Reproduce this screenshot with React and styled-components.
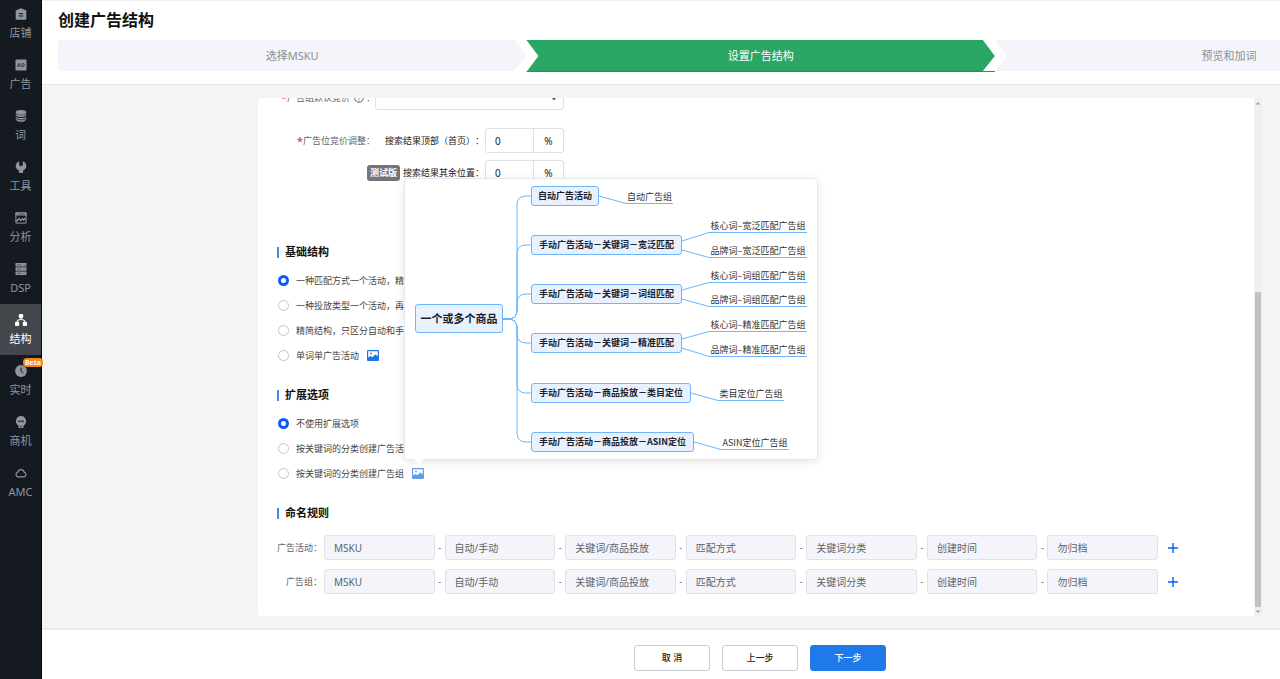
import React from "react";
import styled, { createGlobalStyle, css } from "styled-components";

const GlobalStyle = createGlobalStyle`
  * {
    box-sizing: border-box;
  }
  body {
    margin: 0;
    font-family: "Noto Sans", "Noto Sans CJK SC", sans-serif;
    font-size: 9px;
    text-spacing-trim: space-all;
    color: #222;
  }
  button, input, select {
    font-family: inherit;
    margin: 0;
  }
`;

const Page = styled.div`
  display: flex;
  height: 100vh;
  overflow: hidden;
  background: #f4f4f4;
`;

/* ---------- sidebar ---------- */

const Sidebar = styled.nav`
  flex: none;
  width: 42px;
  background: #151a21;
  border-right: 1px solid #05080c;
`;

const NavList = styled.ul`
  list-style: none;
  margin: -2px 0 0;
  padding: 0;
`;

const NavItem = styled.li`
  position: relative;
`;

const NavLink = styled.a`
  display: flex;
  flex-direction: column;
  align-items: center;
  gap: 5px;
  height: 51px;
  padding-top: 10px;
  font-size: 11px;
  line-height: 16px;
  text-decoration: none;
  color: ${p => (p.$active ? "#fff" : "#8f969e")};
  background: ${p => (p.$active ? "#43464b" : "transparent")};
`;

const Beta = styled.span`
  position: absolute;
  top: 3px;
  right: -2px;
  padding: 0 2px;
  border-radius: 4px;
  background: #ff8412;
  color: #fff;
  font-size: 7px;
  font-weight: 700;
  line-height: 9px;
`;

/* ---------- header ---------- */

const Main = styled.div`
  flex: 1;
  min-width: 0;
  display: flex;
  flex-direction: column;
`;

const Header = styled.header`
  flex: none;
  height: 85px;
  padding: 7px 0 0 16px;
  background: #fff;
  border-top: 1px solid #f0f0f0;
  border-bottom: 1px solid #e6e6e6;
  overflow: hidden;
`;

const Title = styled.h1`
  margin: 0 0 8px;
  font-size: 16px;
  line-height: 24px;
  color: #111;
`;

const Steps = styled.ol`
  display: flex;
  align-items: flex-start;
  width: 115%;
  margin: 0;
  padding: 0;
  list-style: none;
`;

const Step = styled.li`
  flex: 1;
  height: 31px;
  font-size: 11px;
  line-height: 31px;
  text-align: center;
  color: #8b8f96;
  background: #f4f5fa;
  clip-path: polygon(
    0 0,
    calc(100% - 12px) 0,
    100% 50%,
    calc(100% - 12px) 100%,
    0 100%,
    12px 50%
  );
  &:first-child {
    border-radius: 3px 0 0 3px;
    clip-path: polygon(
      0 0,
      calc(100% - 12px) 0,
      100% 50%,
      calc(100% - 12px) 100%,
      0 100%
    );
  }
  ${p =>
    p.$active &&
    css`
      height: 32px;
      color: #fff;
      background: #2aa765;
      border-bottom: 1px solid #149a54;
      clip-path: polygon(
        0 0,
        calc(100% - 12px) 0,
        100% 50%,
        calc(100% - 12px) calc(100% - 1px),
        100% calc(100% - 1px),
        100% 100%,
        0 100%,
        12px 50%
      );
    `}
`;

/* ---------- form panel ---------- */

const Body = styled.main`
  flex: 1;
  min-height: 0;
  display: flex;
  padding: 13px 18px 12px 216px;
`;

const Panel = styled.form`
  flex: 1;
  min-width: 0;
  display: flex;
  flex-direction: column;
  justify-content: flex-end;
  overflow: hidden;
  padding: 0 19px 22px;
  background: #fff;
  border-radius: 3px 0 0 3px;
`;

const Scrollbar = styled.div`
  flex: none;
  display: flex;
  flex-direction: column;
  justify-content: space-between;
  align-items: center;
  width: 8px;
  background: #f0f0f0;
`;

const Track = styled.div`
  flex: 1;
  display: flex;
  align-items: flex-end;
`;

const Thumb = styled.div`
  width: 6px;
  height: 63%;
  background: #c1c1c1;
`;

const ScrollArrow = styled.svg`
  width: 8px;
  height: 9px;
  fill: #a5a5a5;
`;

const BidRows = styled.div`
  flex: none;
  width: 287px;
  margin-bottom: 59px;
`;

const BidRow = styled.div`
  display: flex;
  align-items: center;
  height: 25px;
  margin-top: ${p => (p.$tight ? 7 : 18)}px;
`;

const BidLabel = styled.label`
  flex: none;
  display: flex;
  align-items: center;
  justify-content: flex-end;
  width: 98px;
  color: #606266;
  white-space: nowrap;
  svg {
    margin: 0 2px 0 4px;
  }
`;

const Required = styled.span`
  color: #f04848;
  font-size: 11px;
  font-weight: 700;
`;

const BidField = styled.div`
  flex: 1;
  display: flex;
  align-items: center;
  justify-content: flex-end;
`;

const SubLabel = styled.label`
  margin-right: 1px;
  color: #222;
  white-space: nowrap;
`;

const TestTag = styled.span`
  margin-right: 3px;
  padding: 0 3px;
  border-radius: 3px;
  background: #757575;
  color: #fff;
  font-weight: 700;
  line-height: 16px;
  white-space: nowrap;
`;

const Box = styled.div`
  display: flex;
  align-items: center;
  width: ${p => (p.$wide ? "189px" : "79px")};
  height: 25px;
  border: 1px solid #dcdfe6;
  border-radius: 3px;
  background: #fff;
`;

const PercentInput = styled.input`
  width: 48px;
  height: 23px;
  padding: 0 9px;
  border: 0;
  border-right: 1px solid #dcdfe6;
  background: transparent;
  font-size: 10px;
  color: #222;
`;

const Unit = styled.span`
  flex: 1;
  text-align: center;
  font-size: 10px;
`;

const Select = styled.select`
  flex: 1;
  height: 23px;
  border: 0;
  appearance: none;
  background: transparent;
`;

const SelectArrow = styled.svg`
  width: 6px;
  height: 6px;
  margin-right: 6px;
`;

/* ---------- sections ---------- */

const Section = styled.fieldset`
  flex: none;
  min-width: 0;
  margin: 0 0 ${p => (p.$last ? 0 : 19)}px;
  padding: 0;
  border: 0;
`;

const SectionTitle = styled.legend`
  display: flex;
  align-items: center;
  gap: 6px;
  padding: 0;
  margin-bottom: ${p => (p.$loose ? 14 : 8)}px;
  font-size: 11px;
  line-height: 16px;
  font-weight: 700;
  color: #111;
  &::before {
    content: "";
    width: 2px;
    height: 11px;
    background: #3f8cf0;
  }
`;

const OptionRow = styled.div`
  display: flex;
  align-items: center;
  height: 25px;
  padding-left: 1px;
`;

const Option = styled.label`
  display: flex;
  align-items: center;
  gap: 7px;
  color: #444;
  white-space: nowrap;
`;

const Radio = styled.input`
  appearance: none;
  width: 11px;
  height: 11px;
  border: 1px solid #c3c6cd;
  border-radius: 50%;
  background: #fff;
  &:checked {
    border: 3px solid #0a5cf5;
  }
`;

const Preview = styled.span`
  position: relative;
  margin-left: 8px;
  height: 11px;
`;

const PreviewButton = styled.button`
  display: block;
  width: 12px;
  height: 11px;
  padding: 0;
  border: 0;
  background: none;
  opacity: ${p => (p.$open ? 0.7 : 1)};
  svg {
    display: block;
  }
`;

/* ---------- structure popover ---------- */

const Popover = styled.div`
  position: absolute;
  z-index: 10;
  left: -8px;
  bottom: calc(100% + 8px);
  width: 414px;
  height: 282px;
  border: 1px solid #e6e8ee;
  border-radius: 3px;
  background: #fff;
  box-shadow: 0 2px 8px rgba(0, 0, 0, 0.1);
  font-family: "Noto Sans CJK SC", sans-serif;
  &::after {
    content: "";
    position: absolute;
    left: 9px;
    bottom: -5px;
    border: 5px solid transparent;
    border-top-color: #fff;
    border-bottom: 0;
  }
`;

const Links = styled.svg`
  position: absolute;
  left: 0;
  top: 0;
  width: 412px;
  height: 280px;
  fill: none;
  stroke: #6db6fb;
`;

const MapNode = styled.div`
  position: absolute;
  left: ${p => p.$x}px;
  top: ${p => p.$y}px;
  width: ${p => p.$w}px;
  height: ${p => (p.$root ? 29 : 20)}px;
  border: 1px solid #6db6fb;
  border-radius: 3px;
  background: #e9f1ff;
  color: #1a1f2b;
  font-size: ${p => (p.$root ? 11 : 9)}px;
  font-weight: 700;
  line-height: ${p => (p.$root ? 27 : 18)}px;
  text-align: center;
  white-space: nowrap;
`;

const Leaf = styled.div`
  position: absolute;
  left: ${p => p.$x}px;
  top: ${p => p.$y - 14}px;
  width: ${p => p.$w}px;
  height: 15px;
  border-bottom: 1px solid #6db6fb;
  line-height: 16px;
  text-align: center;
  white-space: nowrap;
  color: #333;
`;

/* ---------- naming ---------- */

const NameRow = styled.div`
  display: flex;
  align-items: center;
  height: 25px;
  margin: 0 57px 9px 0;
  &:last-child {
    margin-bottom: 0;
  }
`;

const NameLabel = styled.label`
  flex: none;
  width: 47px;
  padding-right: 2px;
  text-align: right;
  color: #606266;
  white-space: nowrap;
`;

const NameInput = styled.input`
  flex: 1;
  min-width: 0;
  height: 25px;
  padding: 0 9px;
  border: 1px solid #dfe2e8;
  border-radius: 3px;
  background: #f4f5fa;
  font-size: 10px;
  color: #606266;
`;

const Dash = styled.span`
  flex: none;
  width: 10px;
  text-align: center;
  color: #606266;
`;

const AddButton = styled.button`
  flex: none;
  width: 10px;
  height: 10px;
  margin-left: 10px;
  padding: 0;
  border: 0;
  background: none;
  svg {
    display: block;
  }
`;

/* ---------- footer ---------- */

const Footer = styled.footer`
  flex: none;
  display: flex;
  justify-content: center;
  gap: 12px;
  height: 51px;
  padding: 15px 18px 0 216px;
  background: #fff;
  border-top: 2px solid #ebebeb;
`;

const Button = styled.button`
  width: 76px;
  height: 26px;
  padding: 0 0 2px;
  border: 1px solid ${p => (p.$primary ? "#2079e8" : "#c9ccd2")};
  border-radius: 3px;
  background: ${p => (p.$primary ? "#2079e8" : "#fff")};
  color: ${p => (p.$primary ? "#fff" : "#222")};
  font-size: 9px;
  font-weight: 500;
`;

const Icon = ({ children }) => (
  <svg width="12" height="12" viewBox="0 0 12 12" fill="currentColor">
    {children}
  </svg>
);

const navItems = [
  {
    text: "店铺",
    icon: (
      <Icon>
        <path d="M6 0.2 11.3 2.6V11a.8.8 0 0 1-.8.8h-9A.8.8 0 0 1 .7 11V2.6Z" />
        <path d="M3.8 5.7h4.4M3.8 8h4.4" stroke="#151a21" />
      </Icon>
    )
  },
  {
    text: "广告",
    icon: (
      <Icon>
        <rect x="0.5" y="0.5" width="11" height="11" rx="0.8" />
        <path
          d="M2.4 7.8 3.9 4.3 5.4 7.8M3 6.8h1.8M6.9 4.6v3h.9a1.5 1.5 0 0 0 0-3Z"
          fill="none"
          stroke="#151a21"
          strokeWidth="0.7"
        />
      </Icon>
    )
  },
  {
    text: "词",
    icon: (
      <Icon>
        <ellipse cx="6" cy="2.4" rx="5.2" ry="2.3" />
        <path d="M.8 3.7C2 5.7 10 5.7 11.2 3.7V5.3C10.4 7.7 1.6 7.7.8 5.3Z" />
        <path d="M.8 6.6C2 8.6 10 8.6 11.2 6.6V9.2C10.4 12.6 1.6 12.6.8 9.2Z" />
        <path
          d="M1 8.3C2.6 10.3 9.4 10.3 11 8.3"
          fill="none"
          stroke="#151a21"
          strokeWidth="0.7"
        />
      </Icon>
    )
  },
  {
    text: "工具",
    icon: (
      <Icon>
        <path d="M4.2.3V4.2L6 5.3 7.8 4.2V.3C10 1 11.3 2.8 11.3 5 11.3 7.2 10 8.6 8.2 9.3V11A.9.9 0 0 1 7.3 11.9H4.7A.9.9 0 0 1 3.8 11V9.3C2 8.6.7 7.2.7 5 .7 2.8 2 1 4.2.3Z" />
      </Icon>
    )
  },
  {
    text: "分析",
    icon: (
      <Icon>
        <path d="M.9.9H11.1V11.1H.9Z" fill="none" stroke="currentColor" />
        <path d="M.5.5h11v3H.5Z" />
        <path d="M2 2h1M4 2h6" stroke="#151a21" strokeWidth="0.6" />
        <path
          d="M1.3 9.6 4 6.7 6 8.4 7.5 6.8 8.8 8 10.5 6"
          fill="none"
          stroke="currentColor"
          strokeWidth="1.4"
        />
      </Icon>
    )
  },
  {
    text: "DSP",
    icon: (
      <Icon>
        <rect x="0.5" y="0" width="11" height="3.6" rx="0.6" />
        <rect x="0.5" y="4.2" width="11" height="3.6" rx="0.6" />
        <rect x="0.5" y="8.4" width="11" height="3.6" rx="0.6" />
        <path
          d="M2 1.8h4.5M8.6 1.8h1.2M2 6h4.5M8.6 6h1.2M2 10.2h4.5M8.6 10.2h1.2"
          stroke="#151a21"
          strokeWidth="0.5"
        />
      </Icon>
    )
  },
  {
    text: "结构",
    active: true,
    icon: (
      <Icon>
        <rect x="3.8" y="0" width="4.4" height="4.2" rx="1.2" />
        <rect x="0" y="7.8" width="4.2" height="4.2" rx="1" />
        <rect x="7.8" y="7.8" width="4.2" height="4.2" rx="1" />
        <path
          d="M6 3.5V5.4M2.1 8.2C2.1 6.2 3.2 5.5 6 5.5S9.9 6.2 9.9 8.2"
          fill="none"
          stroke="currentColor"
          strokeWidth="1.1"
        />
      </Icon>
    )
  },
  {
    text: "实时",
    beta: true,
    icon: (
      <Icon>
        <circle cx="6" cy="6" r="5.9" />
        <path d="M6 2.6V6.4L8.3 7.9" fill="none" stroke="#151a21" />
      </Icon>
    )
  },
  {
    text: "商机",
    icon: (
      <Icon>
        <path d="M6 0A5.2 5.2 0 0 1 8.6 9.6V11A1 1 0 0 1 7.6 12H4.4A1 1 0 0 1 3.4 11V9.6A5.2 5.2 0 0 1 6 0Z" />
        <path
          d="M3.8 4.2V5.8L6 5 8.2 5.8V4.2M4.9 10.3h2.2"
          fill="none"
          stroke="#151a21"
          strokeWidth="0.9"
        />
      </Icon>
    )
  },
  {
    text: "AMC",
    icon: (
      <Icon>
        <path
          d="M3 9.8A2.3 2.3 0 0 1 2.7 5.3 3.4 3.4 0 0 1 9.3 5.3 2.3 2.3 0 0 1 9 9.8Z"
          fill="none"
          stroke="currentColor"
          strokeWidth="1.2"
        />
      </Icon>
    )
  }
];

// coordinates are relative to the popover
const branches = [
  {
    text: "自动广告活动",
    y: 7,
    w: 68,
    leaves: [{ text: "自动广告组", x: 221, y: 24, w: 47 }]
  },
  {
    text: "手动广告活动－关键词－宽泛匹配",
    y: 56,
    w: 151,
    leaves: [
      { text: "核心词–宽泛匹配广告组", x: 304, y: 53, w: 98 },
      { text: "品牌词–宽泛匹配广告组", x: 304, y: 78, w: 98 }
    ]
  },
  {
    text: "手动广告活动－关键词－词组匹配",
    y: 105,
    w: 151,
    leaves: [
      { text: "核心词–词组匹配广告组", x: 304, y: 103, w: 98 },
      { text: "品牌词–词组匹配广告组", x: 304, y: 127, w: 98 }
    ]
  },
  {
    text: "手动广告活动－关键词－精准匹配",
    y: 154,
    w: 151,
    leaves: [
      { text: "核心词–精准匹配广告组", x: 304, y: 152, w: 98 },
      { text: "品牌词–精准匹配广告组", x: 304, y: 177, w: 98 }
    ]
  },
  {
    text: "手动广告活动－商品投放－类目定位",
    y: 204,
    w: 160,
    leaves: [{ text: "类目定位广告组", x: 313, y: 221, w: 66 }]
  },
  {
    text: "手动广告活动－商品投放－ASIN定位",
    y: 253,
    w: 163,
    leaves: [{ text: "ASIN定位广告组", x: 316, y: 270, w: 68 }]
  }
];

const ROOT_Y = 140;
const BRANCH_X = 126;

const branchPath = y => {
  const dir = y < ROOT_Y ? -1 : 1;
  return `M98 ${ROOT_Y}H103Q112 ${ROOT_Y} 112 ${ROOT_Y + dir * 9}V${y -
    dir * 9}Q112 ${y} 121 ${y}H${BRANCH_X}`;
};

const leafPath = (branch, leaf) => {
  const mid = branch.y + 10;
  let from = mid;
  if (branch.leaves.length > 1) {
    from = leaf.y < mid ? mid - 4 : mid + 5;
  }
  return `M${BRANCH_X + branch.w} ${from}L${leaf.x} ${leaf.y + 0.5}`;
};

const StructureMap = () => (
  <Popover role="tooltip">
    <Links>
      {branches.map(b => (
        <path key={b.text} d={branchPath(b.y + 10)} />
      ))}
      {branches.map(b =>
        b.leaves.map(l => <path key={l.text} d={leafPath(b, l)} />)
      )}
    </Links>
    <MapNode $root $x={10} $y={125} $w={88}>
      一个或多个商品
    </MapNode>
    {branches.map(b => (
      <React.Fragment key={b.text}>
        <MapNode $x={BRANCH_X} $y={b.y} $w={b.w}>
          {b.text}
        </MapNode>
        {b.leaves.map(l => (
          <Leaf key={l.text} $x={l.x} $y={l.y} $w={l.w}>
            {l.text}
          </Leaf>
        ))}
      </React.Fragment>
    ))}
  </Popover>
);

const PictureIcon = () => (
  <svg width="12" height="11" viewBox="0 0 12 11">
    <rect width="12" height="11" rx="1" fill="#1f74e6" />
    <path d="M1.2 1.2H10.8V6.2L8.4 4.4 5.4 7.2 3.6 6 1.2 7.6Z" fill="#fff" />
    <circle cx="4" cy="3.3" r="0.9" fill="#1f74e6" />
  </svg>
);

const basicOptions = [
  { text: "一种匹配方式一个活动，精细控制" },
  { text: "一种投放类型一个活动，再细分组" },
  { text: "精简结构，只区分自动和手动" },
  { text: "单词单广告活动", preview: true }
];

const extendOptions = [
  { text: "不使用扩展选项" },
  { text: "按关键词的分类创建广告活动" },
  { text: "按关键词的分类创建广告组", preview: true, open: true }
];

const nameParts = [
  "MSKU",
  "自动/手动",
  "关键词/商品投放",
  "匹配方式",
  "关键词分类",
  "创建时间",
  "勿归档"
];

const OptionList = ({ name, options }) =>
  options.map((o, i) => (
    <OptionRow key={o.text}>
      <Option>
        <Radio type="radio" name={name} defaultChecked={i === 0} />
        {o.text}
      </Option>
      {o.preview && (
        <Preview>
          <PreviewButton type="button" aria-label="示意图" $open={o.open}>
            <PictureIcon />
          </PreviewButton>
          {o.open && <StructureMap />}
        </Preview>
      )}
    </OptionRow>
  ));

const NamingRow = ({ id, label }) => (
  <NameRow>
    <NameLabel htmlFor={id}>{label}：</NameLabel>
    {nameParts.map((part, i) => (
      <React.Fragment key={part}>
        {i > 0 && <Dash>-</Dash>}
        <NameInput
          id={i === 0 ? id : undefined}
          aria-label={i === 0 ? undefined : part}
          defaultValue={part}
          readOnly
        />
      </React.Fragment>
    ))}
    <AddButton type="button" aria-label="添加">
      <svg width="10" height="10" viewBox="0 0 10 10">
        <path d="M5 0v10M0 5h10" stroke="#0a5cf5" strokeWidth="1.4" />
      </svg>
    </AddButton>
  </NameRow>
);

const App = () => (
  <Page>
    <GlobalStyle />
    <Sidebar>
      <NavList>
        {navItems.map(item => (
          <NavItem key={item.text}>
            <NavLink href="#" $active={item.active}>
              {item.icon}
              {item.text}
            </NavLink>
            {item.beta && <Beta>Beta</Beta>}
          </NavItem>
        ))}
      </NavList>
    </Sidebar>
    <Main>
      <Header>
        <Title>创建广告结构</Title>
        <Steps>
          <Step>选择MSKU</Step>
          <Step $active>设置广告结构</Step>
          <Step>预览和加词</Step>
        </Steps>
      </Header>
      <Body>
        <Panel>
          <BidRows>
            <BidRow>
              <BidLabel htmlFor="defaultBid">
                <Required>*</Required>广告组默认竞价
                <svg width="10" height="10" viewBox="0 0 10 10" fill="none">
                  <circle cx="5" cy="5" r="4.3" stroke="#606266" />
                  <path d="M5 2.4v3.2M5 6.6v1" stroke="#606266" />
                </svg>
                ：
              </BidLabel>
              <BidField>
                <Box $wide>
                  <Select id="defaultBid" />
                  <SelectArrow viewBox="0 0 6 6">
                    <path d="M0 2h6L3 5.5Z" fill="#606266" />
                  </SelectArrow>
                </Box>
              </BidField>
            </BidRow>
            <BidRow>
              <BidLabel htmlFor="topBid">
                <Required>*</Required>广告位竞价调整：
              </BidLabel>
              <BidField>
                <SubLabel htmlFor="topBid">搜索结果顶部（首页）：</SubLabel>
                <Box>
                  <PercentInput id="topBid" defaultValue="0" />
                  <Unit>%</Unit>
                </Box>
              </BidField>
            </BidRow>
            <BidRow $tight>
              <BidField>
                <TestTag>测试版</TestTag>
                <SubLabel htmlFor="restBid">搜索结果其余位置：</SubLabel>
                <Box>
                  <PercentInput id="restBid" defaultValue="0" />
                  <Unit>%</Unit>
                </Box>
              </BidField>
            </BidRow>
          </BidRows>
          <Section>
            <SectionTitle>基础结构</SectionTitle>
            <OptionList name="basic" options={basicOptions} />
          </Section>
          <Section>
            <SectionTitle>扩展选项</SectionTitle>
            <OptionList name="extend" options={extendOptions} />
          </Section>
          <Section $last>
            <SectionTitle $loose>命名规则</SectionTitle>
            <NamingRow id="campaignName" label="广告活动" />
            <NamingRow id="groupName" label="广告组" />
          </Section>
        </Panel>
        <Scrollbar>
          <ScrollArrow viewBox="0 0 8 9">
            <path d="M1.5 6.5h5L4 4Z" />
          </ScrollArrow>
          <Track>
            <Thumb />
          </Track>
          <ScrollArrow viewBox="0 0 8 9">
            <path d="M1.5 3.5h5L4 6Z" />
          </ScrollArrow>
        </Scrollbar>
      </Body>
      <Footer>
        <Button type="button">取 消</Button>
        <Button type="button">上一步</Button>
        <Button type="button" $primary>
          下一步
        </Button>
      </Footer>
    </Main>
  </Page>
);

export default App;
